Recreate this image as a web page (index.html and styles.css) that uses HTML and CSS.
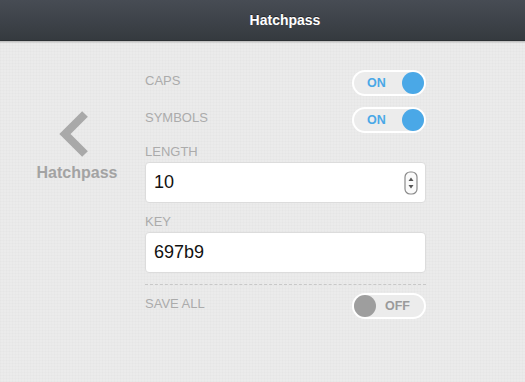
FILE: index.html
```html
<!DOCTYPE html>
<html>
<head>
<meta charset="utf-8">
<link rel="stylesheet" href="styles.css">
</head>
<body>
<header class="topbar"><span class="topbar-title">Hatchpass</span></header>
<main class="main">
  <aside class="back">
    <svg class="back-chevron" width="80" height="52" viewBox="0 0 80 52">
      <polyline points="48,6 28,26 48,46" fill="none" stroke="#a9a9a9" stroke-width="8" stroke-linejoin="miter" stroke-linecap="butt"/>
    </svg>
    <span class="back-label">Hatchpass</span>
  </aside>
  <section class="form">
    <div class="row">
      <span class="label">CAPS</span>
      <span class="toggle on"><span class="toggle-text">ON</span><span class="knob"></span></span>
    </div>
    <div class="row row-second">
      <span class="label">SYMBOLS</span>
      <span class="toggle on"><span class="toggle-text">ON</span><span class="knob"></span></span>
    </div>
    <div class="field-label">LENGTH</div>
    <div class="input">
      <span class="input-text">10</span>
      <svg class="spinner" width="14" height="24" viewBox="0 0 14 24">
        <rect x="1" y="1" width="12" height="22" rx="5" ry="5" fill="#fafafa" stroke="#8a8a8a" stroke-width="1.2"/>
        <polygon points="7,6.5 9.5,10 4.5,10" fill="#555"/>
        <polygon points="7,17.5 9.5,14 4.5,14" fill="#555"/>
      </svg>
    </div>
    <div class="field-label">KEY</div>
    <div class="input">
      <span class="input-text">697b9</span>
    </div>
    <div class="divider"></div>
    <div class="row">
      <span class="label">SAVE ALL</span>
      <span class="toggle off"><span class="knob"></span><span class="toggle-text">OFF</span></span>
    </div>
  </section>
</main>
</body>
</html>
```
FILE: styles.css
```css
html, body {
  margin: 0;
  padding: 0;
}
body {
  width: 525px;
  height: 382px;
  overflow: hidden;
  font-family: "Liberation Sans", Arial, sans-serif;
  background-color: #ebebeb;
  background-image:
    repeating-linear-gradient(90deg, rgba(0,0,0,0.012) 0 1px, rgba(255,255,255,0.02) 1px 3px),
    repeating-linear-gradient(0deg, rgba(0,0,0,0.012) 0 1px, rgba(255,255,255,0.02) 1px 3px);
}
.topbar {
  height: 41px;
  box-sizing: border-box;
  padding-left: 45px;
  display: flex;
  justify-content: center;
  align-items: center;
  background: linear-gradient(#474c54, #353a3f);
  border-bottom: 1px solid #2c3034;
  box-shadow: 0 1px 0 #c2c2c2, 0 2px 1px rgba(0,0,0,0.08);
}
.topbar-title {
  color: #ffffff;
  font-weight: bold;
  font-size: 14px;
  line-height: 41px;
  text-shadow: 0 -1px 0 rgba(0,0,0,0.45);
}
.main {
  display: flex;
}
.back {
  width: 145px;
  box-sizing: border-box;
  padding-left: 9px;
  padding-top: 67px;
  display: flex;
  flex-direction: column;
  align-items: center;
}
.back-chevron {
  display: block;
}
.back-label {
  margin-top: 4px;
  font-size: 16px;
  font-weight: bold;
  color: #a3a3a3;
  line-height: 18px;
}
.form {
  width: 281px;
  padding-top: 29px;
  display: flex;
  flex-direction: column;
}
.row {
  display: flex;
  justify-content: space-between;
  align-items: flex-start;
  height: 26px;
}
.row-second {
  margin-top: 11px;
}
.label, .field-label {
  font-size: 13px;
  line-height: 15px;
  color: #ababab;
}
.label {
  padding-top: 3px;
}
.field-label {
  margin-top: 11px;
  margin-bottom: 3px;
}
.toggle {
  width: 74px;
  height: 26px;
  box-sizing: border-box;
  border: 2px solid #ffffff;
  border-radius: 13px;
  background: #ececec;
  display: flex;
  align-items: center;
}
.toggle.on {
  justify-content: space-between;
  padding-left: 13px;
}
.toggle.off {
  padding-left: 0;
}
.knob {
  width: 22px;
  height: 22px;
  border-radius: 50%;
}
.toggle.on .knob {
  background: #4aa8e7;
}
.toggle.off .knob {
  background: #9e9e9e;
}
.toggle-text {
  font-size: 12.5px;
  font-weight: bold;
}
.toggle.on .toggle-text {
  color: #4aa8e7;
}
.toggle.off .toggle-text {
  color: #9a9a9a;
  margin-left: 9px;
}
.input {
  height: 41px;
  box-sizing: border-box;
  background: #ffffff;
  border: 1px solid #dcdcdc;
  border-radius: 4px;
  display: flex;
  align-items: center;
  justify-content: space-between;
  padding-left: 8px;
  padding-right: 7px;
}
.input-text {
  font-size: 18px;
  color: #111111;
}
.spinner {
  display: block;
}
.divider {
  margin-top: 11px;
  height: 0;
  border-top: 1px dashed #c8c8c8;
  margin-bottom: 8px;
}
```
